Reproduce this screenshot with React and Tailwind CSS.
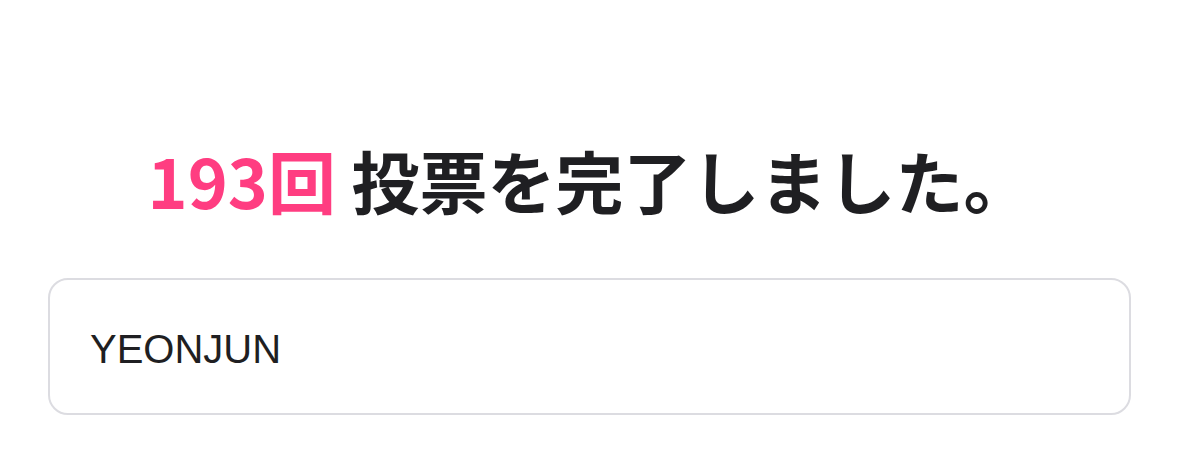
import React from "react";

export default function App() {
  return (
    <div className="h-[457px] w-full bg-white px-[48px] pt-[134px] font-['Noto_Sans_CJK_JP','Noto_Sans',sans-serif]">
      <h1 className="text-center text-[68px] font-bold leading-[92px] text-[#1f1f22]">
        <span className="text-[#ff3d81]">193回</span>{" "}
        <span className="font-semibold">投票を完了しました。</span>
      </h1>
      <div className="mt-[52px] flex h-[137px] items-center rounded-[20px] border-[2.5px] border-[#dcdce1] px-[40px]">
        <span className="pt-[4px] font-['Liberation_Sans',sans-serif] text-[40px] text-[#1f1f22]">YEONJUN</span>
      </div>
    </div>
  );
}
